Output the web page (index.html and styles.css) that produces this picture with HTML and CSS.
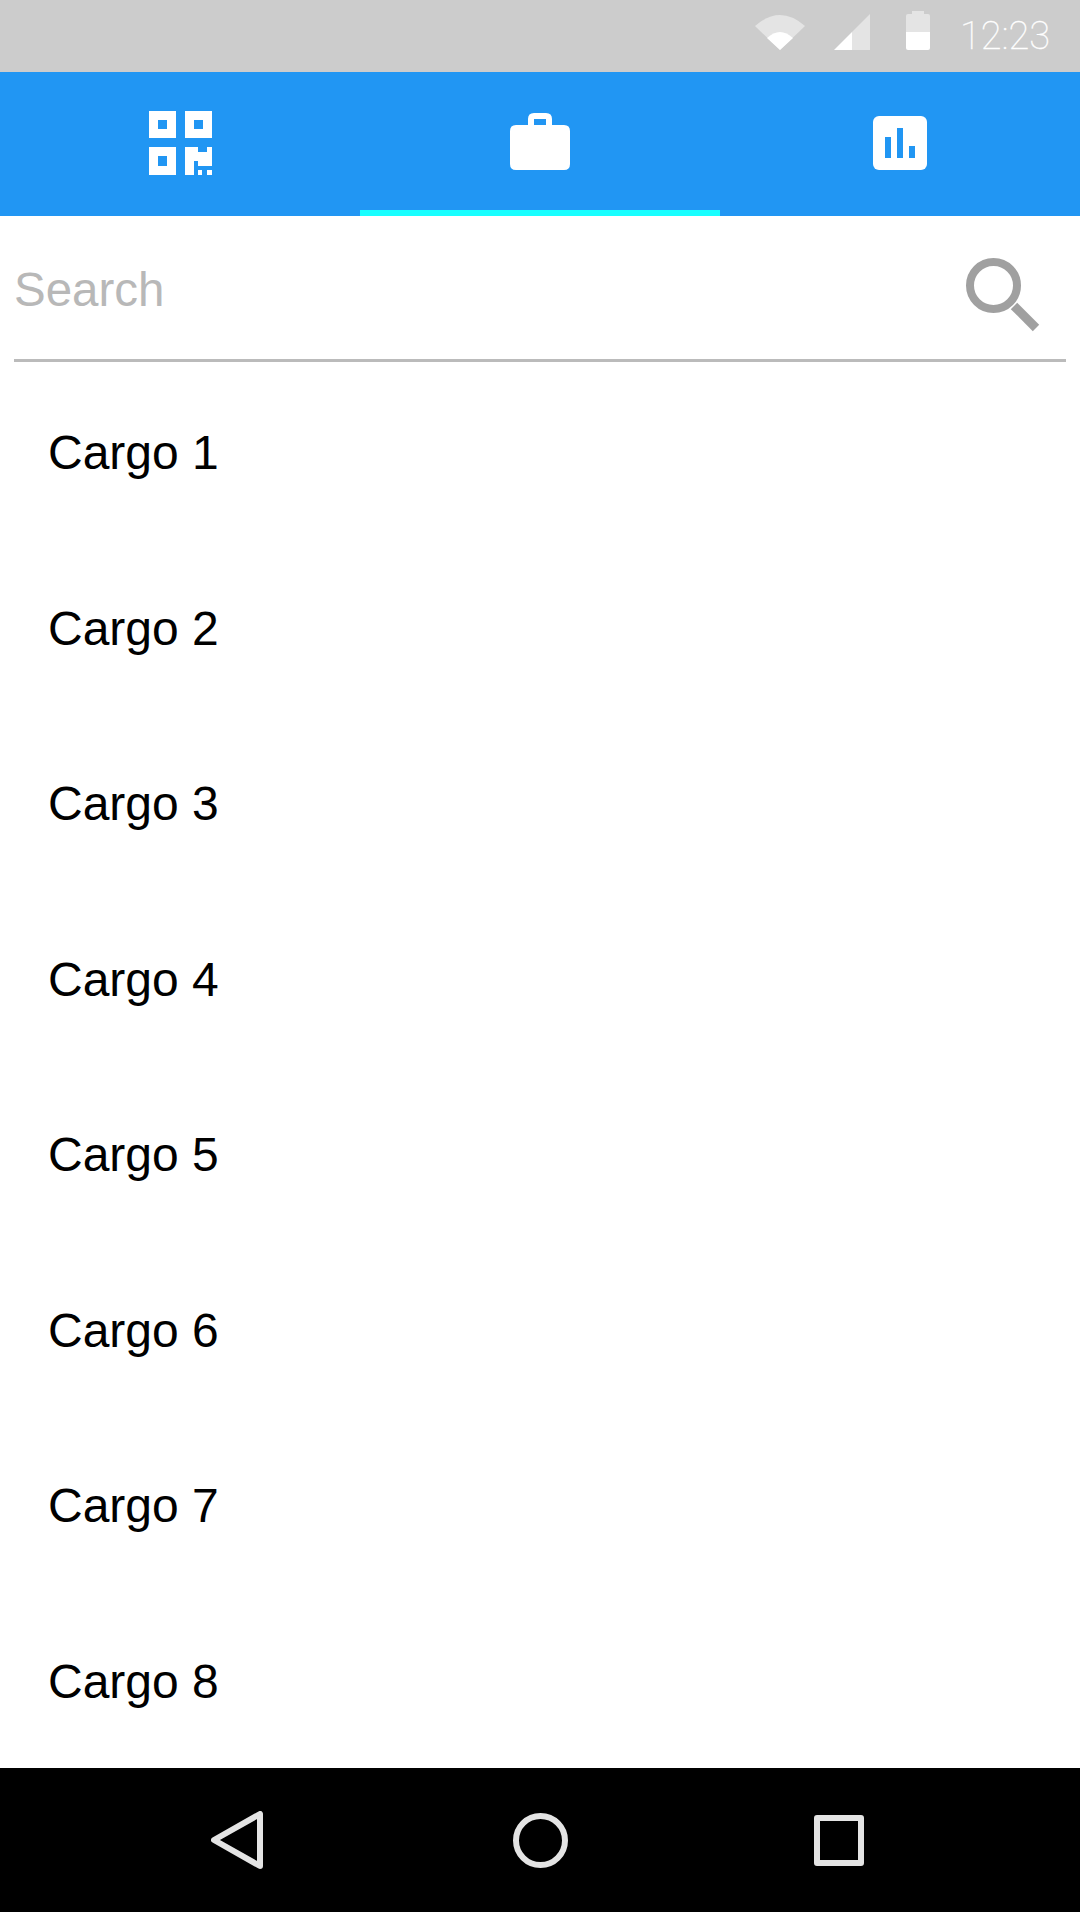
FILE: index.html
```html
<!DOCTYPE html>
<html lang="en">
<head>
  <meta charset="UTF-8">
  <meta name="viewport" content="width=device-width, initial-scale=1.0">
  <title>Cargo</title>
  <link rel="stylesheet" href="styles.css">
</head>
<body>
  <div class="status-bar">
    <svg class="wifi" width="50" height="35" viewBox="0 0 50 35">
      <path d="M0 11 Q25 -11 50 11 L25 35 Z" fill="#e4e4e4"/>
      <path d="M12 23 Q25 11 38 23 L25 35 Z" fill="#fff"/>
    </svg>
    <svg class="signal" width="36" height="36" viewBox="0 0 36 36">
      <path d="M36 0 V36 H18 V18 Z" fill="#e4e4e4"/>
      <path d="M18 18 V36 H0 Z" fill="#fff"/>
    </svg>
    <svg class="battery" width="24" height="39" viewBox="0 0 24 39">
      <path d="M6 0 H18 V3 H22 Q24 3 24 5 V21 H0 V5 Q0 3 2 3 H6 Z" fill="#e4e4e4"/>
      <path d="M0 21 H24 V37 Q24 39 22 39 H2 Q0 39 0 37 Z" fill="#fff"/>
    </svg>
    <span class="time">12:23</span>
  </div>

  <div class="tabs">
    <div class="tab">
      <svg class="icon-qr" width="63" height="64" viewBox="0 0 63 64" fill="#fff">
        <path fill-rule="evenodd" d="M0 0 H27 V27 H0 Z M9 9 V18 H18 V9 Z"/>
        <path fill-rule="evenodd" d="M36 0 H63 V27 H36 Z M45 9 V18 H54 V9 Z"/>
        <path fill-rule="evenodd" d="M0 36 H27 V64 H0 Z M9 45 V55 H18 V45 Z"/>
        <path d="M36 36 H49 V41 H58 V36 H63 V55 H49 V50 H45 V64 H36 Z"/>
        <rect x="49" y="59" width="4" height="5"/>
        <rect x="58" y="59" width="5" height="5"/>
      </svg>
    </div>
    <div class="tab active">
      <svg width="60" height="57" viewBox="0 0 60 57" fill="#fff">
        <path fill-rule="evenodd" d="M24 0 H36 Q42 0 42 6 V12 H54 Q60 12 60 18 V51 Q60 57 54 57 H6 Q0 57 0 51 V18 Q0 12 6 12 H18 V6 Q18 0 24 0 Z M24 6 V12 H36 V6 Z"/>
      </svg>
    </div>
    <div class="tab">
      <svg width="54" height="54" viewBox="0 0 54 54">
        <rect width="54" height="54" rx="6" fill="#fff"/>
        <rect x="12" y="21" width="6" height="21" fill="#2196f3"/>
        <rect x="24" y="12" width="6" height="30" fill="#2196f3"/>
        <rect x="36" y="30" width="6" height="12" fill="#2196f3"/>
      </svg>
    </div>
  </div>

  <div class="search">
    <span class="search-label">Search</span>
    <svg width="74" height="74" viewBox="0 0 74 74" fill="none" stroke="#a0a0a0">
      <circle cx="27.5" cy="27.5" r="23.5" stroke-width="8"/>
      <path d="M48 48 L70 70" stroke-width="9"/>
    </svg>
  </div>

  <ul class="list">
    <li>Cargo 1</li>
    <li>Cargo 2</li>
    <li>Cargo 3</li>
    <li>Cargo 4</li>
    <li>Cargo 5</li>
    <li>Cargo 6</li>
    <li>Cargo 7</li>
    <li>Cargo 8</li>
  </ul>

  <div class="nav-bar">
    <svg width="52" height="58" viewBox="0 0 52 58" fill="none" stroke="#e4e4e4" stroke-width="6" stroke-linejoin="round">
      <path d="M49 3 V55 L3 29 Z"/>
    </svg>
    <svg width="55" height="55" viewBox="0 0 55 55" fill="none" stroke="#e4e4e4" stroke-width="6">
      <circle cx="27.5" cy="27.5" r="24.5"/>
    </svg>
    <svg width="50" height="51" viewBox="0 0 50 51" fill="none" stroke="#e4e4e4" stroke-width="6" stroke-linejoin="round">
      <rect x="3" y="3" width="44" height="45"/>
    </svg>
  </div>
</body>
</html>
```

FILE: styles.css
```css
* {
  box-sizing: border-box;
}

body {
  margin: 0;
  height: 1920px;
  background-color: #fff;
  font-family: "Liberation Sans", Arial, sans-serif;
  display: flex;
  flex-direction: column;
}

.status-bar {
  height: 72px;
  flex-shrink: 0;
  background-color: #ccc;
  display: flex;
  justify-content: flex-end;
  align-items: flex-start;
  padding-right: 30px;
}

.status-bar .wifi {
  margin-top: 15px;
}

.status-bar .signal {
  margin: 14px 0 0 29px;
}

.status-bar .battery {
  margin: 11px 0 0 36px;
}

.time {
  margin: 16px 0 0 30px;
  font-family: Roboto, sans-serif;
  font-weight: 100;
  font-size: 38px;
  line-height: 40px;
  color: #fff;
  -webkit-text-stroke: 0.3px #fff;
}

.tabs {
  height: 144px;
  flex-shrink: 0;
  background-color: #2196f3;
  display: grid;
  grid-template-columns: repeat(3, 1fr);
}

.tab {
  display: flex;
  justify-content: center;
  align-items: flex-start;
  padding-top: 39px;
}

.tab.active {
  padding-top: 41px;
  border-bottom: 6px solid #18ffff;
}

.tab:last-child {
  padding-top: 44px;
}

.search {
  height: 146px;
  flex-shrink: 0;
  margin: 0 14px;
  border-bottom: 3px solid #bbb;
  display: flex;
  justify-content: space-between;
  align-items: flex-start;
  padding: 42px 26px 0 0;
}

.search-label {
  font-size: 47.5px;
  line-height: 54px;
  margin-top: 5px;
  color: #b8b8b8;
}

.list {
  flex: 1;
  margin: 0;
  padding: 0;
  list-style: none;
  display: flex;
  flex-direction: column;
}

.list li {
  height: 175.5px;
  padding: 64px 0 0 48px;
  font-size: 48px;
  line-height: 54px;
  color: #000;
}

.nav-bar {
  height: 144px;
  margin-bottom: 8px;
  flex-shrink: 0;
  background-color: #000;
  display: flex;
  align-items: center;
  padding-left: 211px;
  gap: 250px;
}

.nav-bar svg:last-child {
  margin-left: -4px;
}
```
